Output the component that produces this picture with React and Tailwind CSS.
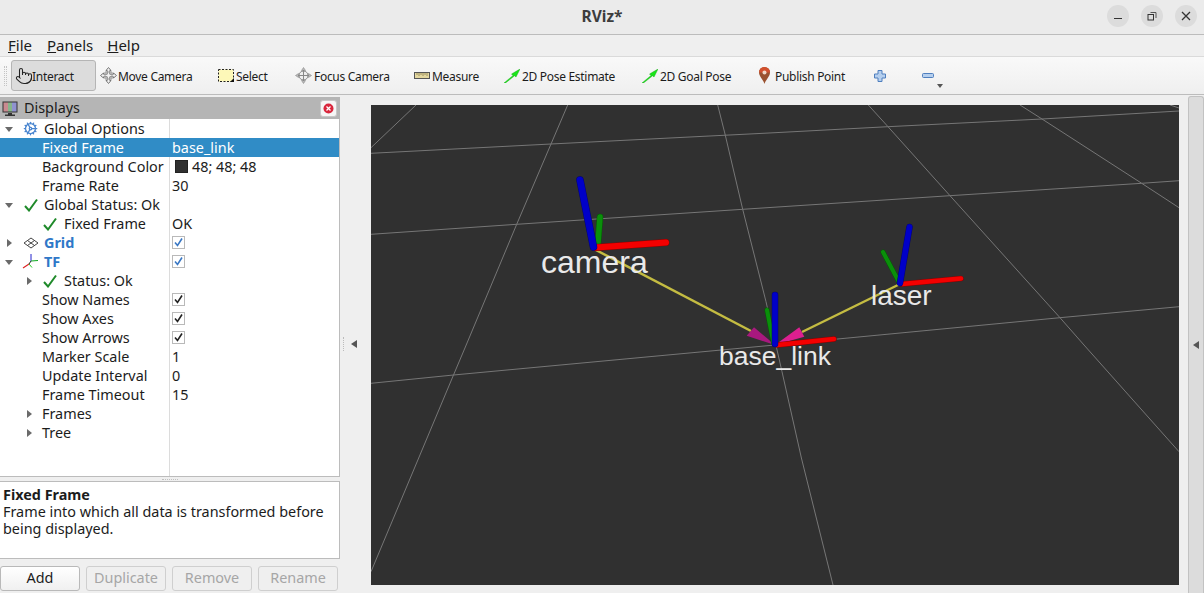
import React from 'react';
import { Pointer, Cog } from 'lucide-react';

const Arrow = ({ open }) => (
  <svg width="8" height="8" viewBox="0 0 8 8" className="shrink-0">
    {open ? <path d="M0 2h8L4 7z" fill="#6a6a6a" /> : <path d="M2 0v8l5-4z" fill="#6a6a6a" />}
  </svg>
);

const Check = () => (
  <svg width="14" height="14" viewBox="0 0 14 14" className="shrink-0">
    <path d="M1 8l4 4.500L13 1.500" fill="none" stroke="#1f8a2a" strokeWidth="2" />
  </svg>
);

const CheckBox = ({ blue }) => (
  <div className="w-[13px] h-[13px] border border-[#b9b9b9] bg-white flex items-center justify-center">
    <svg width="11" height="11" viewBox="0 0 11 11">
      <path d="M2 5.500l2.500 3L9 1.500" fill="none" stroke={blue ? '#3a78c4' : '#222222'} strokeWidth="1.600" />
    </svg>
  </div>
);

const GridIcon = () => (
  <svg width="16" height="12" viewBox="0 0 16 12" className="shrink-0">
    <path d="M8 1l7 5-7 5-7-5zM4.500 3.500l7 5M11.500 3.500l-7 5" fill="none" stroke="#444444" strokeWidth="1" />
  </svg>
);

const TfIcon = () => (
  <svg width="17" height="17" viewBox="0 0 17 17" className="shrink-0">
    <path d="M9 8V1" stroke="#2222cc" strokeWidth="1" />
    <path d="M9 8l7-.5" stroke="#11aa22" strokeWidth="1" />
    <path d="M9 8l-2 3" stroke="#222222" strokeWidth="1" />
    <path d="M7 11l-6 4" stroke="#dd2222" strokeWidth="1.200" />
    <path d="M7 11l3 3.500" stroke="#22cc22" strokeWidth="1" />
  </svg>
);

// one row of the property tree, label cell + value cell
const Row = ({ label, value, selected }) => (
  <div className={`flex h-[19px] items-center ${selected ? 'bg-[#308cc6] text-white' : ''}`}>
    <div className="w-[169px] h-full flex items-center shrink-0">{label}</div>
    <div className={`flex-1 h-full flex items-center pl-[2px] border-l ${selected ? 'border-[#308cc6]' : 'border-[#dcdcdc]'}`}>{value}</div>
  </div>
);

const TopLabel = ({ icon, text, open, blue }) => (
  <div className="flex items-center pl-[5px]">
    <Arrow open={open} />
    <div className="w-[17px] ml-[9px] flex justify-center">{icon}</div>
    <span className={`ml-[5px] ${blue ? 'font-bold text-[#2f78c8]' : ''}`}>{text}</span>
  </div>
);

const Prop = ({ text }) => <span className="pl-[42px]">{text}</span>;

const StatusLabel = ({ text, arrow }) => (
  <div className="flex items-center pl-[25px]">
    <div className="w-[8px]">{arrow && <Arrow />}</div>
    <div className="ml-[10px]"><Check /></div>
    <span className="ml-[7px]">{text}</span>
  </div>
);

const ClosedProp = ({ text }) => (
  <div className="flex items-center pl-[25px]">
    <Arrow />
    <span className="ml-[9px]">{text}</span>
  </div>
);

const MoveIcon = () => (
  <svg width="17" height="17" viewBox="0 0 17 17">
    <path d="M8.500 .5l2.500 3H9.800v3.700h3.700V6l3 2.500-3 2.500V9.800H9.800v3.700H11l-2.500 3-2.500-3h1.200V9.800H3.500V11l-3-2.500 3-2.500v1.200h3.700V3.500H6z" fill="#f2f2f2" stroke="#777777" strokeWidth="1" />
    <path d="M5 5h7v7H5z" fill="none" stroke="#999999" strokeWidth="1" />
  </svg>
);

const SelectIcon = () => (
  <svg width="16" height="13" viewBox="0 0 16 13">
    <rect x=".5" y=".5" width="15" height="12" fill="#fdf8b8" stroke="#222222" strokeDasharray="2 1.500" />
    <path d="M12 13l4-4v4z" fill="#111111" />
  </svg>
);

const FocusIcon = () => (
  <svg width="17" height="17" viewBox="0 0 17 17">
    <path d="M8.500 .5l2 3h-4zM8.500 16.500l2-3h-4zM.5 8.500l3-2v4zM16.500 8.500l-3-2v4z" fill="#bbbbbb" stroke="#888888" strokeWidth=".6" />
    <circle cx="8.500" cy="8.500" r="4.500" fill="#eeeeee" stroke="#888888" />
    <path d="M8.500 3v11M3 8.500h11" stroke="#888888" />
  </svg>
);

const RulerIcon = () => (
  <svg width="16" height="7" viewBox="0 0 16 7">
    <rect x=".5" y=".5" width="15" height="6" fill="#e3d79f" stroke="#555555" />
    <path d="M3 1v2M5 1v3M7 1v2M9 1v3M11 1v2M13 1v3" stroke="#8a7f50" strokeWidth=".8" />
  </svg>
);

const PoseIcon = () => (
  <svg width="16" height="14" viewBox="0 0 16 14">
    <path d="M0 14L9 6.500 7.500 5 16 0l-4 8-1.400-1.200L1.500 14z" fill="#19e619" stroke="#12a012" strokeWidth=".4" />
  </svg>
);

const PinIcon = () => (
  <svg width="11" height="17" viewBox="0 0 11 17">
    <path d="M5.500 17C4.500 13 0 9.500 0 5.500a5.500 5.500 0 0 1 11 0C11 9.500 6.500 13 5.500 17z" fill="#9a5230" />
    <path d="M5.500 0a5.500 5.500 0 0 1 5.500 5.500H0A5.500 5.500 0 0 1 5.500 0z" fill="#d2502e" />
    <circle cx="5.500" cy="5.500" r="2" fill="#f0d8c8" />
  </svg>
);

const PlusIcon = () => (
  <svg width="12" height="12" viewBox="0 0 12 12">
    <path d="M4 .5h4V4h3.500v4H8v3.500H4V8H.5V4H4z" fill="#b5cfee" stroke="#4f7fbe" />
  </svg>
);

const MinusIcon = () => (
  <svg width="12" height="5" viewBox="0 0 12 5">
    <rect x=".5" y=".5" width="11" height="4" rx="1" fill="#b5cfee" stroke="#4f7fbe" />
  </svg>
);

const tools = [
  { name: 'Interact', w: 'w-[85px]', icon: <Pointer size={18} strokeWidth={1.4} color="#222222" />, gap: '-ml-[1px]', active: true },
  { name: 'Move Camera', w: 'w-[118px] ml-[1px]', icon: <MoveIcon />, gap: 'ml-[1px]' },
  { name: 'Select', w: 'w-[77px]', icon: <SelectIcon />, gap: 'ml-[2px]' },
  { name: 'Focus Camera', w: 'w-[119px]', icon: <FocusIcon />, gap: 'ml-[2px]' },
  { name: 'Measure', w: 'w-[90px]', icon: <RulerIcon />, gap: 'ml-[2px]' },
  { name: '2D Pose Estimate', w: 'w-[138px]', icon: <PoseIcon />, gap: 'ml-[2px]' },
  { name: '2D Goal Pose', w: 'w-[117px]', icon: <PoseIcon />, gap: 'ml-[2px]' },
  { name: 'Publish Point', w: 'w-[115px]', icon: <PinIcon />, gap: 'ml-[5px]' },
  { name: '', w: 'w-[48px]', icon: <PlusIcon />, gap: '' },
  { name: '', w: 'w-[30px]', icon: <MinusIcon />, gap: '' },
];

// an axis of a tf frame: dark edge underneath, coloured body on top
const Tube = ({ d, color, edge, w }) => (
  <g fill="none" strokeLinecap="round">
    <path d={d} stroke={edge} strokeWidth={w} />
    <path d={d} stroke={color} strokeWidth={w - 1} />
  </g>
);

const Viewport = () => (
  <svg viewBox="371 105 808 480" width="808" height="480" className="block">
    <g fill="none" stroke="#767676" strokeWidth="1">
      <path d="M371 153.300L551 144 775 132.700 888 126.700 1042 119 1179 111" />
      <path d="M371 234.300L516.700 224.300 742.700 209.300 950 195.700 1141.700 183.300 1179 180.700" />
      <path d="M371 383.300L453.500 375 775 345 1060 317.700 1179 306.700" />
      <path d="M416 105L371 147.700" />
      <path d="M567.700 105L551 144 516.700 224.300 466.200 345 453.500 375 371 571.700" />
      <path d="M717.700 105L725 134 742.700 209.300 766 301.700 782 371.700 801.400 458 833 585" />
      <path d="M868.300 105L888 126.700 950 195.700 1060 317.700 1084 345 1179 451.700" />
      <path d="M1020 105L1042 119 1141.700 183.300 1179 207.700" />
      <path d="M1170 105L1179 108" />
    </g>
    <path d="M594 249L751 331" stroke="#c4bc42" strokeWidth="2.500" />
    <path d="M900 284L802 332" stroke="#c4bc42" strokeWidth="2.500" />
    <path d="M775 345L746.700 335.700 754 327.300z" fill="#a8187e" />
    <path d="M775 345L804.300 336.700 799.300 327.300z" fill="#dc1f90" />

    <Tube d="M598 243L600 217" color="#0a8f0a" edge="#065a06" w={6.5} />
    <Tube d="M596 247.500L666 242.500" color="#f40000" edge="#8a0000" w={7} />
    <Tube d="M593.500 247L580 180" color="#0000c8" edge="#00007a" w={7.5} />

    <Tube d="M773.500 343L767 310" color="#0a8f0a" edge="#065a06" w={5} />
    <Tube d="M777 345L834 339" color="#f40000" edge="#8a0000" w={5.5} />
    <Tube d="M775 344V295" color="#0000c8" edge="#00007a" w={6.5} />

    <Tube d="M899 282L883 252" color="#0a8f0a" edge="#065a06" w={5} />
    <Tube d="M902 284L961 278.500" color="#f40000" edge="#8a0000" w={5.5} />
    <Tube d="M900 283L909.500 227" color="#0000c8" edge="#00007a" w={6.5} />

    <g fill="#e9e9e9" fontFamily="'Liberation Sans', Arial, sans-serif">
      <text x="541" y="273" fontSize="32">camera</text>
      <text x="871" y="304.500" fontSize="28">laser</text>
      <text x="719" y="365" fontSize="26.500">base_link</text>
    </g>
  </svg>
);

export default function App() {
  return (
    <div className="w-[1204px] h-[593px] flex flex-col overflow-hidden bg-[#efefef] text-[14.400px] text-[#1c1c1c] font-['Noto_Sans',sans-serif]">
      {/* window title */}
      <div className="h-[35px] shrink-0 bg-[#ebebeb] border-b border-[#bcbcbc] grid grid-cols-[1fr_auto_1fr] items-center">
        <div />
        <span className="font-bold text-[15.500px] text-[#3d3d3d]">RViz*</span>
        <div className="flex justify-end gap-[12px] pr-[7px] pb-[2px]">
          <div className="w-[22px] h-[22px] rounded-full bg-[#dcdcdc] flex items-center justify-center">
            <svg width="10" height="10" viewBox="0 0 10 10"><path d="M1 7.500h8" stroke="#333333" strokeWidth="1" /></svg>
          </div>
          <div className="w-[22px] h-[22px] rounded-full bg-[#dcdcdc] flex items-center justify-center">
            <svg width="10" height="10" viewBox="0 0 10 10"><path d="M3.500 1.500h5.500v5.500" fill="none" stroke="#555555" strokeWidth="1" /><rect x="1" y="3.500" width="5.500" height="5.500" fill="none" stroke="#333333" strokeWidth="1" /></svg>
          </div>
          <div className="w-[22px] h-[22px] rounded-full bg-[#dcdcdc] flex items-center justify-center">
            <svg width="10" height="10" viewBox="0 0 10 10"><path d="M1 1l8 8M9 1l-8 8" stroke="#333333" strokeWidth="1.300" /></svg>
          </div>
        </div>
      </div>

      {/* menu */}
      <div className="h-[22px] shrink-0 border-b border-[#dadada] flex items-center pl-[8px] gap-[14px] text-[15px]">
        <span><u>F</u>ile</span>
        <span className="ml-[1px]"><u>P</u>anels</span>
        <span><u>H</u>elp</span>
      </div>

      {/* toolbar */}
      <div className="h-[38px] shrink-0 border-b border-[#bcbcbc] bg-gradient-to-b from-[#f9f9f9] to-[#efefef] flex items-center">
        <div className="w-[11px] h-[20px] pl-[4px] shrink-0">
          <div className="w-[3px] h-full border-x border-dotted border-[#c4c4c4]" />
        </div>
        {tools.map((tool, i) => (
          <div
            key={i}
            className={`${tool.w} shrink-0 h-[31px] flex items-center pl-[3px] whitespace-nowrap text-[12px] tracking-[-0.3px] ${tool.active ? 'bg-[#dcdcdc] border border-[#b5b5b5] rounded-[3px]' : ''}`}
          >
            {tool.icon}
            {tool.name && <span className={`${tool.gap} mt-[2px]`}>{tool.name}</span>}
          </div>
        ))}
        <svg width="6" height="4" viewBox="0 0 6 4" className="self-end mb-[6px] -ml-[12px]"><path d="M0 0h6L3 4z" fill="#555555" /></svg>
      </div>

      <div className="flex-1 min-h-0 flex">
        {/* displays panel */}
        <div className="w-[340px] shrink-0 flex flex-col pt-[2px]">
          <div className="h-[22px] shrink-0 bg-[#b5b5b5] flex items-center pl-[2px] pr-[3px]">
            <svg width="16" height="15" viewBox="0 0 16 15">
              <rect x=".5" y=".5" width="15" height="11" fill="#333333" />
              <rect x="1.500" y="1.500" width="4.500" height="9" fill="#c98a90" />
              <rect x="6" y="1.500" width="4" height="9" fill="#86b48a" />
              <rect x="10" y="1.500" width="4.500" height="9" fill="#8f92d0" />
              <path d="M6 12h4v1.500h3V15H3v-1.500h3z" fill="#333333" />
            </svg>
            <span className="ml-[6px]">Displays</span>
            <div className="ml-auto w-[17px] h-[17px] rounded-[3px] bg-[#f6f6f6] border border-[#c8c8c8] flex items-center justify-center">
              <svg width="11" height="11" viewBox="0 0 11 11">
                <circle cx="5.500" cy="5.500" r="5" fill="#d9263c" />
                <path d="M3.500 3.500l4 4M7.500 3.500l-4 4" stroke="#ffffff" strokeWidth="1.300" />
              </svg>
            </div>
          </div>

          <div className="h-[358px] shrink-0 bg-white border-r border-b border-[#bcbcbc] flex flex-col">
            <Row label={<TopLabel open icon={<Cog size={15} color="#4a86d0" strokeWidth={2} />} text="Global Options" />} />
            <Row selected label={<Prop text="Fixed Frame" />} value="base_link" />
            <Row
              label={<Prop text="Background Color" />}
              value={<div className="flex items-center pl-[3px]"><div className="w-[13px] h-[13px] bg-[#303030] border border-[#222222]" /><span className="ml-[4px]">48; 48; 48</span></div>}
            />
            <Row label={<Prop text="Frame Rate" />} value="30" />
            <Row label={<TopLabel open icon={<Check />} text="Global Status: Ok" />} />
            <Row label={<StatusLabel text="Fixed Frame" />} value="OK" />
            <Row label={<TopLabel blue icon={<GridIcon />} text="Grid" />} value={<CheckBox blue />} />
            <Row label={<TopLabel open blue icon={<TfIcon />} text="TF" />} value={<CheckBox blue />} />
            <Row label={<StatusLabel arrow text="Status: Ok" />} />
            <Row label={<Prop text="Show Names" />} value={<CheckBox />} />
            <Row label={<Prop text="Show Axes" />} value={<CheckBox />} />
            <Row label={<Prop text="Show Arrows" />} value={<CheckBox />} />
            <Row label={<Prop text="Marker Scale" />} value="1" />
            <Row label={<Prop text="Update Interval" />} value="0" />
            <Row label={<Prop text="Frame Timeout" />} value="15" />
            <Row label={<ClosedProp text="Frames" />} />
            <Row label={<ClosedProp text="Tree" />} />
            <div className="flex-1 ml-[169px] border-l border-[#dcdcdc]" />
          </div>

          <div className="h-[4px] shrink-0 flex items-center justify-center">
            <div className="w-[16px] border-t border-dotted border-[#c0c0c0]" />
          </div>

          <div className="h-[78px] shrink-0 bg-white border border-l-0 border-[#bcbcbc] pl-[3px] pt-[4px] leading-[17px]">
            <div className="font-bold">Fixed Frame</div>
            <div>Frame into which all data is transformed before being displayed.</div>
          </div>

          <div className="flex gap-[6px] mt-[7px]">
            <div className="w-[80px] h-[25px] pb-[1px] rounded-[3px] border border-[#b9b9b9] bg-gradient-to-b from-white to-[#f0f0f0] flex items-center justify-center">Add</div>
            {['Duplicate', 'Remove', 'Rename'].map(name => (
              <div key={name} className="w-[80px] h-[25px] pb-[1px] rounded-[3px] border border-[#cfcfcf] flex items-center justify-center text-[#a6a6a6]">{name}</div>
            ))}
          </div>
        </div>

        {/* left collapse strip */}
        <div className="w-[31px] shrink-0 flex items-center">
          <div className="w-[2px] h-[14px] ml-[3px] border-l border-dotted border-[#bbbbbb]" />
          <svg width="6" height="8" viewBox="0 0 6 8" className="ml-[6px]"><path d="M0 4l6-4v8z" fill="#555555" /></svg>
        </div>

        <div className="w-[808px] h-[480px] mt-[10px] shrink-0 bg-[#303030]">
          <Viewport />
        </div>

        <div className="w-[16px] ml-[9px] mt-px shrink-0 bg-[#dcdcdc] border border-b-0 border-[#c2c2c2] rounded-t-[3px] flex items-center justify-center">
          <svg width="6" height="8" viewBox="0 0 6 8"><path d="M0 4l6-4v8z" fill="#555555" /></svg>
        </div>
      </div>
    </div>
  );
}
